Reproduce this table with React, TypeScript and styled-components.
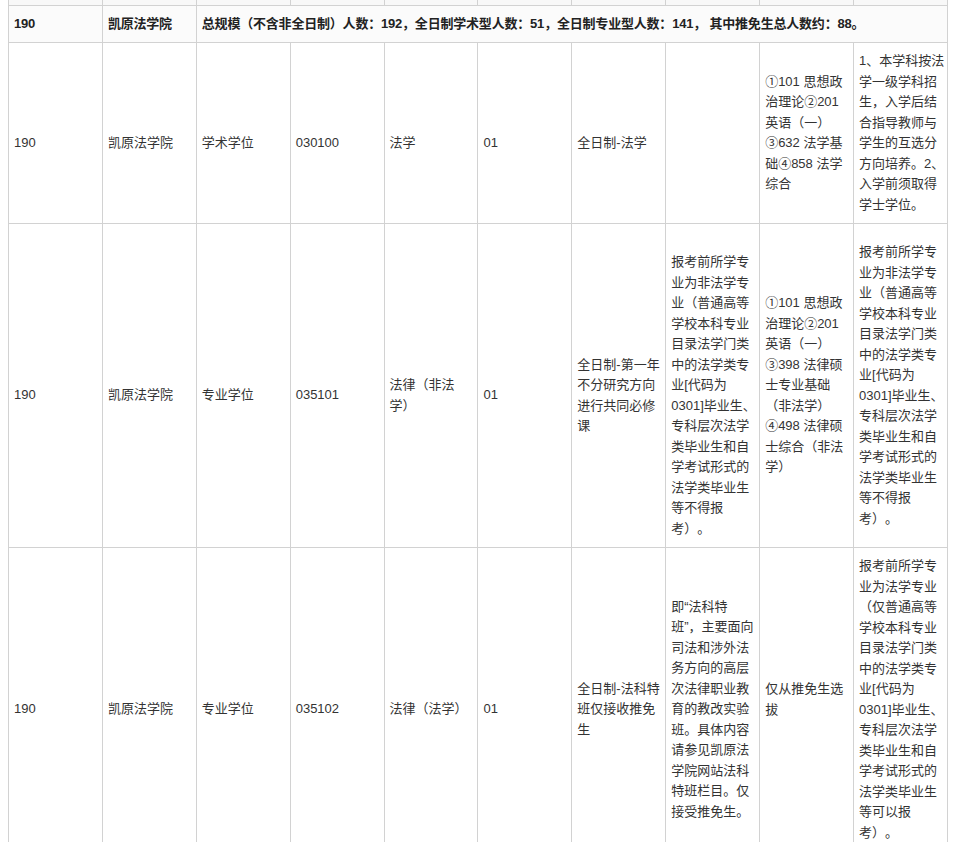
import React from "react"
import styled, { createGlobalStyle } from "styled-components"

const GlobalStyle = createGlobalStyle`
    body {
        margin: 0 0 0 8px;
        background: #fff;
        color: #333;
        font-family: "Liberation Sans", Arial, "Noto Sans CJK SC", sans-serif;
        font-size: 13px;
        text-spacing-trim: space-all;
    }
`

type Row = {
    cells: string[]
}

const rows: Row[] = [
    {
        cells: [
            "190",
            "凯原法学院",
            "学术学位",
            "030100",
            "法学",
            "01",
            "全日制-法学",
            "",
            "①101 思想政治理论②201 英语（一）③632 法学基础④858 法学综合",
            "1、本学科按法学一级学科招生，入学后结合指导教师与学生的互选分方向培养。2、入学前须取得学士学位。"
        ]
    },
    {
        cells: [
            "190",
            "凯原法学院",
            "专业学位",
            "035101",
            "法律（非法学）",
            "01",
            "全日制-第一年不分研究方向进行共同必修课",
            "报考前所学专业为非法学专业（普通高等学校本科专业目录法学门类中的法学类专业[代码为0301]毕业生、专科层次法学类毕业生和自学考试形式的法学类毕业生等不得报考）。",
            "①101 思想政治理论②201 英语（一）③398 法律硕士专业基础（非法学）④498 法律硕士综合（非法学）",
            "报考前所学专业为非法学专业（普通高等学校本科专业目录法学门类中的法学类专业[代码为0301]毕业生、专科层次法学类毕业生和自学考试形式的法学类毕业生等不得报考）。"
        ]
    },
    {
        cells: [
            "190",
            "凯原法学院",
            "专业学位",
            "035102",
            "法律（法学）",
            "01",
            "全日制-法科特班仅接收推免生",
            "即“法科特班”，主要面向司法和涉外法务方向的高层次法律职业教育的教改实验班。具体内容请参见凯原法学院网站法科特班栏目。仅接受推免生。",
            "仅从推免生选拔",
            "报考前所学专业为法学专业（仅普通高等学校本科专业目录法学门类中的法学类专业[代码为0301]毕业生、专科层次法学类毕业生和自学考试形式的法学类毕业生等可以报考）。"
        ]
    }
]

const App = () => {
    return (
        <>
            <GlobalStyle />
            <Table>
                <colgroup>
                    {Array.from({ length: 10 }).map((_, i) => (
                        <col key={i} style={{ width: "10%" }} />
                    ))}
                </colgroup>
                <tbody>
                    <EdgeRow>
                        {Array.from({ length: 10 }).map((_, i) => (
                            <EdgeCell key={i} />
                        ))}
                    </EdgeRow>
                    <SummaryRow>
                        <Cell $bold>190</Cell>
                        <Cell $bold>凯原法学院</Cell>
                        <Cell $bold colSpan={8}>
                            总规模（不含非全日制）人数：192，全日制学术型人数：51，全日制专业型人数：141，
                            其中推免生总人数约：88。
                        </Cell>
                    </SummaryRow>
                    {rows.map((row, r) => (
                        <tr key={r}>
                            {row.cells.map((text, c) => (
                                <Cell key={c} $lead={c < 8}>
                                    {text}
                                </Cell>
                            ))}
                        </tr>
                    ))}
                </tbody>
            </Table>
        </>
    )
}

export default App

const Table = styled.table`
    width: 940px;
    table-layout: fixed;
    border-collapse: collapse;
    font-size: 13px;
    line-height: 20.5px;
    color: #333;
`

const EdgeRow = styled.tr`
    height: 5px;
    background: #f8f8f8;
`

const EdgeCell = styled.td`
    height: 4px;
    padding: 0;
    border-left: 1px solid #d2d2d2;
    border-right: 1px solid #d2d2d2;
    border-bottom: 1px solid #d2d2d2;
`

const SummaryRow = styled.tr`
    background: #fbfbfb;
`

const Cell = styled.td<{ $bold?: boolean; $lead?: boolean }>`
    border: 1px solid #d2d2d2;
    padding: ${p => (p.$lead ? "28px 2px 8px 5px" : "8px 2px 8px 5px")};
    vertical-align: middle;
    word-wrap: break-word;
    text-spacing-trim: space-all;
    font-weight: ${p => (p.$bold ? 700 : 400)};
    letter-spacing: ${p => (p.$bold ? "-0.2px" : "normal")};
    color: ${p => (p.$bold ? "#222" : "#333")};
`
